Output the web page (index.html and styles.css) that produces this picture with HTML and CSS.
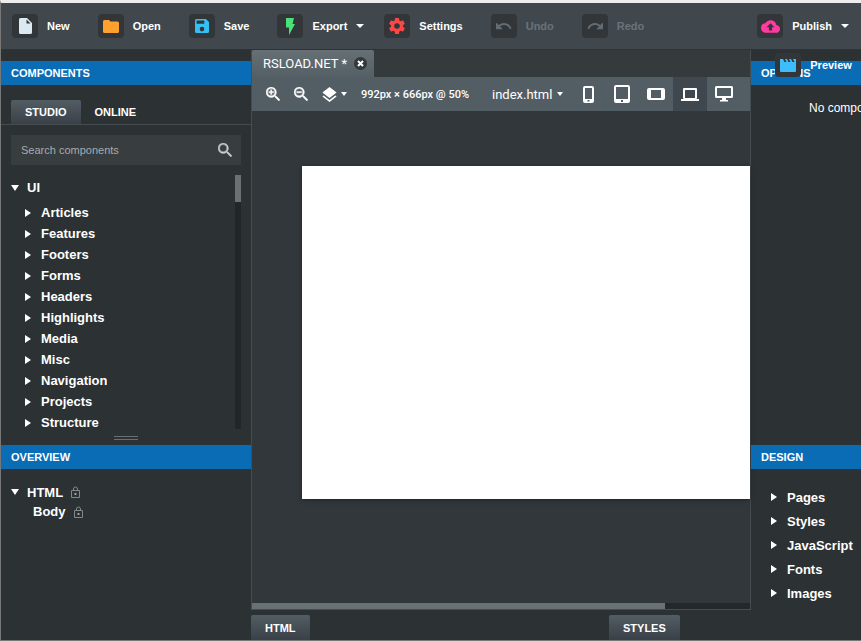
FILE: index.html
```html
<!DOCTYPE html>
<html lang="en">
<head>
<meta charset="utf-8">
<title>RSLOAD.NET</title>
<link rel="stylesheet" href="styles.css">
</head>
<body>
<div class="window">
  <header class="menubar">
    <button class="action"><span class="badge"><svg width="13" height="16" viewBox="0 0 13 16"><path fill="#dce9f0" d="M1.500 0H8l5 5v9.500a1.500 1.500 0 0 1-1.500 1.500h-10A1.500 1.500 0 0 1 0 14.500v-13A1.500 1.500 0 0 1 1.500 0z"/><path fill="#323639" d="M7.500 1.500v4h4z"/></svg></span>New</button>
    <button class="action"><span class="badge"><svg width="16" height="13" viewBox="0 0 16 13"><path fill="#ffa12e" d="M1.500 0H6l1.500 1.500h7A1.500 1.500 0 0 1 16 3v8.500a1.500 1.500 0 0 1-1.500 1.500h-13A1.500 1.500 0 0 1 0 11.500v-10A1.500 1.500 0 0 1 1.500 0z"/></svg></span>Open</button>
    <button class="action"><span class="badge"><svg width="14" height="14" viewBox="3 3 18 18"><path fill="#35c0f3" d="M17 3H5a2 2 0 0 0-2 2v14a2 2 0 0 0 2 2h14a2 2 0 0 0 2-2V7zm-5 16a3 3 0 1 1 0-6 3 3 0 0 1 0 6zm3-10H5V5h10z"/></svg></span>Save</button>
    <button class="action"><span class="badge"><svg width="10" height="17" viewBox="0 0 10 17"><path fill="#49e178" d="M1 0h8L7.500 6H10L4 17V9.500H1z"/></svg></span>Export<i class="caret"></i></button>
    <button class="action settings"><span class="badge"><svg width="16" height="16" viewBox="2 2 20 20"><path fill="#fc4747" d="M19.430 12.980c.04-.32.07-.64.07-.98s-.03-.66-.07-.98l2.110-1.650c.19-.15.24-.42.12-.64l-2-3.460c-.12-.22-.39-.3-.61-.22l-2.490 1c-.52-.4-1.080-.73-1.690-.98l-.38-2.650A.488.488 0 0 0 14 2h-4c-.25 0-.46.18-.49.42l-.38 2.650c-.61.25-1.170.59-1.690.98l-2.490-1c-.23-.09-.49 0-.61.22l-2 3.460c-.13.22-.07.49.12.64l2.110 1.650c-.04.32-.07.65-.07.98s.03.66.07.98l-2.110 1.650c-.19.15-.24.42-.12.64l2 3.460c.12.22.39.3.61.22l2.490-1c.52.4 1.080.73 1.690.98l.38 2.650c.03.24.24.42.49.42h4c.25 0 .46-.18.49-.42l.38-2.650c.61-.25 1.170-.59 1.690-.98l2.490 1c.23.09.49 0 .61-.22l2-3.460c.12-.22.07-.49-.12-.64zM12 15.500a3.500 3.500 0 1 1 0-7 3.500 3.500 0 0 1 0 7z"/></svg></span>Settings</button>
    <button class="action" disabled><span class="badge"><svg width="16" height="7" viewBox="2 8 21 9"><path fill="#626c74" d="M12.500 8c-2.650 0-5.050.99-6.900 2.600L2 7v9h9l-3.620-3.620c1.390-1.160 3.160-1.880 5.120-1.880 3.540 0 6.550 2.310 7.600 5.500l2.370-.78C21.080 11.030 17.150 8 12.500 8z"/></svg></span>Undo</button>
    <button class="action" disabled><span class="badge"><svg width="16" height="7" viewBox="1 8 21 9"><path fill="#626c74" d="M18.400 10.600C16.550 8.990 14.150 8 11.500 8c-4.650 0-8.580 3.030-9.960 7.220L3.900 16c1.050-3.190 4.050-5.500 7.600-5.500 1.950 0 3.730.72 5.120 1.880L13 16h9V7z"/></svg></span>Redo</button>
    <div class="publish">
      <button class="action"><span class="badge"><svg width="19" height="13" viewBox="0 4 24 16"><path fill="#ff3ba0" d="M19.350 10.040A7.490 7.490 0 0 0 12 4C9.110 4 6.600 5.640 5.350 8.040A5.994 5.994 0 0 0 0 14c0 3.310 2.690 6 6 6h13c2.760 0 5-2.240 5-5 0-2.640-2.050-4.780-4.650-4.960zM14 13v4h-4v-4H7l5-5 5 5z"/></svg></span>Publish<i class="caret"></i></button>
      <button class="action preview"><span class="badge"><svg width="16" height="13" viewBox="0 0 16 13"><path fill="#3dbdfb" d="M0 0h3l1.500 3h2L5 0h2l1.500 3h2L9 0h2l1.500 3h2L13 0h3v12a1 1 0 0 1-1 1H1a1 1 0 0 1-1-1z"/></svg></span>Preview</button>
    </div>
  </header>

  <main class="workspace">
    <aside class="side">
      <section class="panel upper">
        <h2>COMPONENTS</h2>
        <div class="source-tabs"><button class="tab active">STUDIO</button><button class="tab">ONLINE</button></div>
        <label class="search"><input type="text" placeholder="Search components" aria-label="Search components"><svg width="14" height="14" viewBox="3 3 17.500 17.500"><path fill="#c9cccd" stroke="#c9cccd" stroke-width=".5" d="M15.500 14h-.79l-.28-.27A6.470 6.470 0 0 0 16 9.500 6.500 6.500 0 1 0 9.500 16c1.610 0 3.090-.59 4.230-1.570l.27.28v.79l5 4.990L20.490 19zm-6 0a4.500 4.500 0 1 1 0-9 4.500 4.500 0 0 1 0 9z"/></svg></label>
        <div class="tree-scroll">
          <div class="tree">
            <button class="node root"><i class="open"></i>UI</button>
            <ul>
              <li><button class="node"><i class="closed"></i>Articles</button></li>
              <li><button class="node"><i class="closed"></i>Features</button></li>
              <li><button class="node"><i class="closed"></i>Footers</button></li>
              <li><button class="node"><i class="closed"></i>Forms</button></li>
              <li><button class="node"><i class="closed"></i>Headers</button></li>
              <li><button class="node"><i class="closed"></i>Highlights</button></li>
              <li><button class="node"><i class="closed"></i>Media</button></li>
              <li><button class="node"><i class="closed"></i>Misc</button></li>
              <li><button class="node"><i class="closed"></i>Navigation</button></li>
              <li><button class="node"><i class="closed"></i>Projects</button></li>
              <li><button class="node"><i class="closed"></i>Structure</button></li>
            </ul>
          </div>
          <div class="track"><div class="thumb"></div></div>
        </div>
        <div class="grip"></div>
      </section>
      <section class="panel lower">
        <h2>OVERVIEW</h2>
        <div class="outline">
          <button class="node root"><i class="open"></i>HTML<svg class="lock" width="9" height="12" viewBox="0 0 9 12"><path fill="none" stroke="#82888b" d="M.5 4.500h8v7h-8zM2.500 4.500V3a2 2 0 0 1 4 0v1.500"/><path fill="#9aa0a3" d="M3.500 7h2v2h-2z"/></svg></button>
          <button class="node child">Body<svg class="lock" width="9" height="12" viewBox="0 0 9 12"><path fill="none" stroke="#82888b" d="M.5 4.500h8v7h-8zM2.500 4.500V3a2 2 0 0 1 4 0v1.500"/><path fill="#9aa0a3" d="M3.500 7h2v2h-2z"/></svg></button>
        </div>
      </section>
    </aside>

    <section class="center">
      <div class="editor">
        <div class="documents">
          <div class="document">RSLOAD.NET *<button class="close" aria-label="Close"><svg width="7" height="7" viewBox="0 0 7 7"><path stroke="#fff" stroke-width="2" d="m1 1 5 5M6 1 1 6"/></svg></button></div>
        </div>
        <div class="toolbar">
          <button class="tool" aria-label="Zoom in"><svg width="14" height="14" viewBox="3 3 17.500 17.500"><path fill="#fff" stroke="#fff" stroke-width=".5" d="M15.500 14h-.79l-.28-.27A6.470 6.470 0 0 0 16 9.500 6.500 6.500 0 1 0 9.500 16c1.610 0 3.090-.59 4.230-1.570l.27.28v.79l5 4.990L20.490 19zm-6 0a4.500 4.500 0 1 1 0-9 4.500 4.500 0 0 1 0 9zM12.500 10.300h-2.200v2.200H8.700v-2.200H6.500V8.700h2.200V6.500h1.600v2.200h2.200z"/></svg></button>
          <button class="tool" aria-label="Zoom out"><svg width="14" height="14" viewBox="3 3 17.500 17.500"><path fill="#fff" stroke="#fff" stroke-width=".5" d="M15.500 14h-.79l-.28-.27A6.470 6.470 0 0 0 16 9.500 6.500 6.500 0 1 0 9.500 16c1.610 0 3.090-.59 4.230-1.570l.27.28v.79l5 4.990L20.490 19zm-6 0a4.500 4.500 0 1 1 0-9 4.500 4.500 0 0 1 0 9zM6.500 8.700h6v1.600h-6z"/></svg></button>
          <button class="tool" aria-label="Layers"><svg width="15" height="15" viewBox="3 2 18 19"><path fill="#fff" d="m11.990 18.540-7.370-5.730L3 14.070l9 7 9-7-1.630-1.270zM12 16l7.360-5.730L21 9l-9-7-9 7 1.630 1.270z"/></svg><i class="caret small"></i></button>
          <span class="size">992px × 666px @ 50%</span>
          <div class="page-picker"><select aria-label="Page"><option>index.html</option></select><i class="caret small"></i></div>
          <div class="devices">
            <button aria-label="Phone"><svg width="11" height="17" viewBox="0 0 11 17"><path fill="#fff" fill-rule="evenodd" d="M2 0h7a2 2 0 0 1 2 2v13a2 2 0 0 1-2 2H2a2 2 0 0 1-2-2V2a2 2 0 0 1 2-2zm0 2v11h7V2zm2.500 12v1.500h2V14z"/></svg></button>
            <button aria-label="Tablet"><svg width="16" height="18" viewBox="0 0 16 18"><path fill="#fff" fill-rule="evenodd" d="M2 0h12a2 2 0 0 1 2 2v14a2 2 0 0 1-2 2H2a2 2 0 0 1-2-2V2a2 2 0 0 1 2-2zm0 2v12h12V2zm5 13v2h2v-2z"/></svg></button>
            <button aria-label="Landscape tablet"><svg width="18" height="12" viewBox="0 0 18 12"><path fill="#fff" fill-rule="evenodd" d="M2 0h14a2 2 0 0 1 2 2v8a2 2 0 0 1-2 2H2a2 2 0 0 1-2-2V2a2 2 0 0 1 2-2zm2 2v8h10V2z"/></svg></button>
            <button class="current" aria-label="Laptop"><svg width="18" height="13" viewBox="0 0 18 13"><path fill="#fff" fill-rule="evenodd" d="M3 0h12a1 1 0 0 1 1 1v9a1 1 0 0 1-1 1h3v2H0v-2h3a1 1 0 0 1-1-1V1a1 1 0 0 1 1-1zm1 2v8h10V2z"/></svg></button>
            <button aria-label="Desktop"><svg width="18" height="16" viewBox="0 0 18 16"><path fill="#fff" fill-rule="evenodd" d="M1.500 0h15A1.500 1.500 0 0 1 18 1.500v9a1.500 1.500 0 0 1-1.500 1.500H11v2h2v1.500H5V14h2v-2H1.500A1.500 1.500 0 0 1 0 10.500v-9A1.500 1.500 0 0 1 1.500 0zM2 2v8h14V2z"/></svg></button>
          </div>
        </div>
        <div class="canvas"><div class="artboard"></div></div>
        <div class="track-x"><div class="thumb-x"></div></div>
      </div>
      <div class="code-tabs"><div><button class="tab active">HTML</button></div><div><button class="tab active">STYLES</button></div></div>
    </section>

    <aside class="side">
      <section class="panel upper">
        <h2>OPTIONS</h2>
        <p class="empty">No component selected</p>
      </section>
      <section class="panel lower">
        <h2>DESIGN</h2>
        <ul class="design">
          <li><button class="node"><i class="closed"></i>Pages</button></li>
          <li><button class="node"><i class="closed"></i>Styles</button></li>
          <li><button class="node"><i class="closed"></i>JavaScript</button></li>
          <li><button class="node"><i class="closed"></i>Fonts</button></li>
          <li><button class="node"><i class="closed"></i>Images</button></li>
        </ul>
      </section>
    </aside>
  </main>
</div>
</body>
</html>
```
FILE: styles.css
```css
* { box-sizing: border-box; }
body { margin: 0; font-family: "Liberation Sans", Arial, sans-serif; font-size: 13px; color: #fff; background: #2c3133; }
button { margin: 0; padding: 0; border: 0; background: none; color: inherit; font: inherit; }
ul { list-style: none; margin: 0; padding: 0; }
svg { display: block; flex: none; }

.window { height: 100vh; display: flex; flex-direction: column; overflow: hidden; border-top: 3px solid #ededed; border-left: 1px solid #777; border-bottom: 1px solid #777; }

.menubar { flex: none; height: 47px; padding: 11px 12px 0 11px; display: flex; align-items: flex-start; gap: 28px; background: #40484d; border-bottom: 1px solid #2e3436; }
.action { display: flex; align-items: center; height: 24px; font-size: 11px; font-weight: bold; white-space: nowrap; }
.action:disabled { color: #69737b; }
.badge { flex: none; width: 26px; height: 24px; margin-right: 9px; display: flex; align-items: center; justify-content: center; border-radius: 4px; background: #323639; }
.settings { margin-left: -8px; }
.caret { border: solid transparent; border-width: 4px 4px 0; border-top-color: #fff; margin-left: 9px; }
.caret.small { border-width: 4px 3px 0; border-top-color: #fff; margin-left: 4px; }
.publish { position: relative; margin-left: auto; }
.preview { position: absolute; top: 39px; left: 18px; z-index: 2; }

.workspace { flex: 1; min-height: 0; display: grid; grid-template-columns: 250px minmax(0, 1fr) 110px; }
.side { display: flex; flex-direction: column; min-height: 0; min-width: 0; overflow: hidden; }
.panel { display: flex; flex-direction: column; min-height: 0; }
.panel.upper { flex: 384 1 0; padding-top: 11px; }
.panel.lower { flex: 195 1 0; }
.panel h2 { flex: none; margin: 0; padding-left: 10px; font-size: 11px; line-height: 24px; background: #0a6cb5; }

.tab { height: 24px; padding: 0 14px; font-size: 11px; font-weight: bold; border-radius: 2px 2px 0 0; }
.tab.active { background: linear-gradient(#535d64, #3a4047); }
.source-tabs { display: flex; margin-top: 15px; padding-left: 10px; border-bottom: 1px solid #454b4e; }
.search { display: flex; align-items: center; height: 30px; flex: none; margin: 10px 10px 0; padding: 0 9px 0 10px; background: #383d40; }
.search input { flex: 1; min-width: 0; padding: 0; border: 0; outline: 0; background: none; font: 11px "Liberation Sans", Arial, sans-serif; color: #fff; }
.search input::placeholder { color: #a8abad; opacity: 1; }

.node { display: flex; align-items: center; height: 21px; font-weight: bold; white-space: nowrap; }
.open { border: solid transparent; border-width: 6px 4px 0; border-top-color: #fff; margin-right: 8px; }
.closed { border: solid transparent; border-width: 4px 0 4px 6px; border-left-color: #fff; margin-right: 10px; }
.tree-scroll { flex: 1; min-height: 0; display: flex; justify-content: space-between; margin: 10px 10px 0; }
.tree { overflow: hidden; padding-top: 2px; }
.tree ul { padding: 4px 0 0 14px; }
.track { width: 6px; background: #222628; }
.thumb { height: 27px; background: #697174; }
.grip { flex: none; align-self: center; width: 24px; height: 4px; margin: 7px 0 5px; border: solid #686e71; border-width: 1px 0; }
.outline { padding: 13px 10px; }
.child { height: 19px; margin: 0 0 0 22px; }
.outline .root { height: 20px; }
.lock { margin-left: 8px; }
.empty { margin: 15px 0 0 58px; font-size: 12px; line-height: 16px; white-space: nowrap; }
.design { padding: 16px 0 0 20px; }
.design .node { height: 24px; }

.center { display: flex; flex-direction: column; min-height: 0; min-width: 0; }
.editor { flex: 1; min-height: 0; display: flex; flex-direction: column; border: solid #454d51; border-width: 0 1px 1px; }
.documents { flex: none; height: 27px; display: flex; background: #353b3d; }
.document { display: flex; align-items: center; gap: 7px; padding: 0 7px 0 11px; border-radius: 2px 2px 0 0; background: linear-gradient(#667075, #546066); font-family: Roboto, sans-serif; }
.close { width: 13px; height: 13px; display: flex; align-items: center; justify-content: center; border-radius: 50%; background: #32383b; }
.toolbar { flex: none; height: 34px; display: flex; align-items: center; padding-left: 14px; background: #535e64; }
.tool { display: flex; align-items: center; margin-right: 14px; }
.size { font-size: 11px; font-weight: 500; font-family: Roboto, sans-serif; white-space: nowrap; }
.page-picker { display: flex; align-items: center; margin-left: auto; margin-right: 8px; }
.page-picker select { appearance: none; border: 0; padding: 0; background: none; color: #fff; font: 13px Roboto, sans-serif; }
.devices { display: flex; margin-right: 9px; }
.devices button { width: 34px; height: 34px; display: flex; align-items: center; justify-content: center; }
.devices .current { background: #3e484e; }
.canvas { flex: 1; min-height: 0; padding: 55px 0 0 50px; background: #32373b; }
.artboard { height: 333px; background: #fff; box-shadow: 0 1px 4px #202427; }
.track-x { flex: none; height: 6px; background: #23282b; }
.thumb-x { width: 83%; height: 6px; background: #687174; }
.code-tabs { flex: none; display: grid; grid-template-columns: 358fr 142fr; height: 30px; padding-top: 5px; }
.code-tabs .tab { height: 25px; display: block; }
```
